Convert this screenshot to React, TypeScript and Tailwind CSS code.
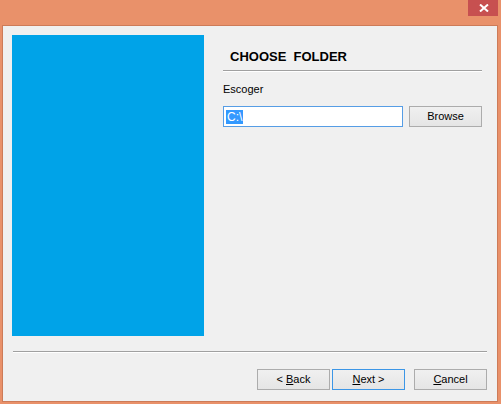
import React from "react";

const font = { fontFamily: '"Liberation Sans", Arial, sans-serif' };

const Button: React.FC<{ children: React.ReactNode; focused?: boolean; className?: string }> = ({
  children,
  focused,
  className = "",
}) => (
  <button
    className={
      (focused ? "border-[#3C96E6] " : "border-[#ACACAC] ") +
      "flex items-center justify-center w-[73px] h-[21px] border bg-gradient-to-b from-[#F0F0F0] to-[#E5E5E5] text-[11px] text-black leading-[13px] " +
      className
    }
  >
    <span>{children}</span>
  </button>
);

export default function App() {
  return (
    <div className="w-[501px] h-[404px] bg-[#E9916A] flex flex-col overflow-hidden" style={font}>
      {/* Title bar */}
      <div className="h-[25px] flex justify-end items-start pr-[3px]">
        <div className="w-[30px] h-[16px] bg-[#C75050] flex items-center justify-center pl-px">
          <svg width="10" height="8" viewBox="0 0 10 8">
            <path d="M1 0.5 L9 7.5 M9 0.5 L1 7.5" stroke="white" strokeWidth="2" />
          </svg>
        </div>
      </div>

      {/* Client area */}
      <div className="ml-[2px] mr-[3px] h-[377px] border border-[#CD7B58] bg-[#F0F0F0] flex flex-col">
        <div className="flex items-start pl-[9px] pt-[9px]">
          <div className="w-[192px] h-[301px] bg-[#00A3E8]" />
          <div className="ml-[19px] w-[259px] flex flex-col">
            <div className="mt-[14px] ml-[7px] text-[13px] leading-[15px] font-bold text-black whitespace-pre">
              CHOOSE  FOLDER
            </div>
            <div className="mt-[6px] border-t border-[#A0A0A0] h-[2px] bg-white" />
            <div className="mt-[11px] text-[11px] leading-[13px] text-black">Escoger</div>
            <div className="mt-[10px] flex items-start">
              <div className="w-[180px] h-[21px] border border-[#569DE5] bg-white flex items-center pl-[2px]">
                <span className="bg-[#3399FF] text-white text-[12px] leading-[14px] px-px">C:\</span>
              </div>
              <Button className="ml-[6px]">Browse</Button>
            </div>
          </div>
        </div>

        {/* Footer */}
        <div className="mt-[15px] mx-[10px] border-t border-[#A0A0A0] h-[2px] bg-white" />
        <div className="mt-[16px] flex items-start justify-end pr-[10px]">
          <Button>
            &lt; <span className="underline">B</span>ack
          </Button>
          <Button focused className="ml-[2px]">
            <span className="underline">N</span>ext &gt;
          </Button>
          <Button className="ml-[9px]">
            <span className="underline">C</span>ancel
          </Button>
        </div>
      </div>
    </div>
  );
}
